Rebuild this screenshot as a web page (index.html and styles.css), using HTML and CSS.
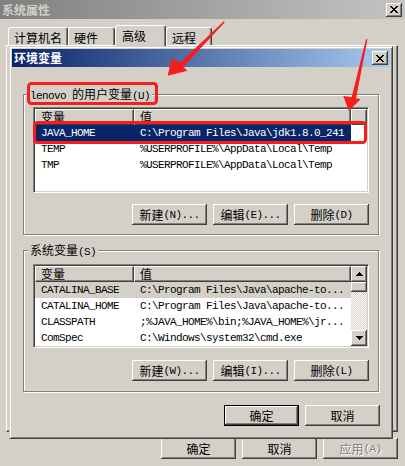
FILE: index.html
```html
<!DOCTYPE html>
<html lang="zh-CN">
<head>
<meta charset="utf-8">
<title>环境变量</title>
<link rel="stylesheet" href="styles.css">
</head>
<body>
<div class="outer">
  <div class="caption inactive">
    <span class="cap-title">系统属性</span>
    <span class="capbtn"><svg width="8" height="7" viewBox="0 0 8 7" shape-rendering="crispEdges"><path d="M0 0h2v1H0zM6 0h2v1H6zM1 1h2v1H1zM5 1h2v1H5zM2 2h4v1H2zM3 3h2v1H3zM2 4h4v1H2zM1 5h2v1H1zM5 5h2v1H5zM0 6h2v1H0zM6 6h2v1H6z" fill="#000"/></svg></span>
  </div>
  <div class="tabs">
    <div class="tab t1">计算机名</div>
    <div class="tab t2">硬件</div>
    <div class="tab t3 sel">高级</div>
    <div class="tab t4">远程</div>
  </div>
  <div class="tabpanel"></div>
  <div class="outer-btns">
    <div class="btn">确定</div>
    <div class="btn">取消</div>
    <div class="btn disabled">应用<span class="m">(A)</span></div>
  </div>
</div>

<div class="dialog">
  <div class="caption active">
    <span class="cap-title">环境变量</span>
    <span class="capbtn"><svg width="8" height="7" viewBox="0 0 8 7" shape-rendering="crispEdges"><path d="M0 0h2v1H0zM6 0h2v1H6zM1 1h2v1H1zM5 1h2v1H5zM2 2h4v1H2zM3 3h2v1H3zM2 4h4v1H2zM1 5h2v1H1zM5 5h2v1H5zM0 6h2v1H0zM6 6h2v1H6z" fill="#000"/></svg></span>
  </div>
  <div class="dbody">
    <div class="group g1">
      <div class="glabel"><span class="m">lenovo </span>的用户变量<span class="m">(U)</span></div>
      <div class="list l1">
        <div class="lmain">
          <div class="lhead"><div class="hc c1">变量</div><div class="hc c2">值</div><div class="hc c3"></div></div>
          <div class="row sel"><span class="c1 m">JAVA_HOME</span><span class="c2 m">C:\Program Files\Java\jdk1.8.0_241</span></div>
          <div class="row"><span class="c1 m">TEMP</span><span class="c2 m">%USERPROFILE%\AppData\Local\Temp</span></div>
          <div class="row"><span class="c1 m">TMP</span><span class="c2 m">%USERPROFILE%\AppData\Local\Temp</span></div>
        </div>
      </div>
      <div class="btnrow">
        <div class="btn">新建<span class="m">(N)...</span></div>
        <div class="btn">编辑<span class="m">(E)...</span></div>
        <div class="btn">删除<span class="m">(D)</span></div>
      </div>
    </div>

    <div class="group g2">
      <div class="glabel">系统变量<span class="m">(S)</span></div>
      <div class="list l2">
        <div class="lmain">
          <div class="lhead"><div class="hc c1">变量</div><div class="hc c2">值</div></div>
          <div class="row inact"><span class="c1 m">CATALINA_BASE</span><span class="c2 m">C:\Program Files\Java\apache-to...</span></div>
          <div class="row"><span class="c1 m">CATALINA_HOME</span><span class="c2 m">C:\Program Files\Java\apache-to...</span></div>
          <div class="row"><span class="c1 m">CLASSPATH</span><span class="c2 m">;%JAVA_HOME%\bin;%JAVA_HOME%\jr...</span></div>
          <div class="row"><span class="c1 m">ComSpec</span><span class="c2 m">C:\Windows\system32\cmd.exe</span></div>
        </div>
        <div class="vscroll">
          <div class="sbtn"><svg width="7" height="4" viewBox="0 0 7 4" shape-rendering="crispEdges"><path d="M3 0h1v1H3zM2 1h3v1H2zM1 2h5v1H1zM0 3h7v1H0z" fill="#000"/></svg></div>
          <div class="thumb"></div>
          <div class="track"></div>
          <div class="sbtn"><svg width="7" height="4" viewBox="0 0 7 4" shape-rendering="crispEdges"><path d="M0 0h7v1H0zM1 1h5v1H1zM2 2h3v1H2zM3 3h1v1H3z" fill="#000"/></svg></div>
        </div>
      </div>
      <div class="btnrow">
        <div class="btn">新建<span class="m">(W)...</span></div>
        <div class="btn">编辑<span class="m">(I)...</span></div>
        <div class="btn">删除<span class="m">(L)</span></div>
      </div>
    </div>

    <div class="dlg-btns">
      <div class="btn default">确定</div>
      <div class="btn">取消</div>
    </div>
  </div>
</div>

<svg class="annot" width="405" height="466" viewBox="0 0 405 466">
  <rect x="28.5" y="83.5" width="128" height="20" rx="3" fill="none" stroke="#f71d1d" stroke-width="3"/>
  <rect x="34.5" y="122.5" width="331" height="20" rx="3" fill="none" stroke="#f71d1d" stroke-width="3"/>
  <polygon points="224.8,22.3 183.3,66.7 187.3,70.7 167.7,75.7 171.7,58.3 180,62.7 223.8,21.3" fill="#f71d1d"/>
  <polygon points="367.4,39.5 356,98.3 360.7,99.3 348.7,110.7 343.3,96 351.7,97.3 366,39.1" fill="#f71d1d"/>
</svg>
</body>
</html>
```
FILE: styles.css
```css
* { box-sizing: border-box; }
html, body { margin: 0; padding: 0; }
body {
  position: relative;
  width: 405px;
  height: 466px;
  overflow: hidden;
  background: #d4d0c8;
  color: #000;
  font-family: "Noto Sans CJK SC", "Liberation Sans", sans-serif;
  font-size: 12px;
  line-height: 16px;
}
.m {
  font-family: "Liberation Mono", "Noto Sans CJK SC", monospace;
  font-size: 11px;
  letter-spacing: -0.6px;
}

/* caption bars */
.caption {
  display: flex;
  align-items: center;
  justify-content: space-between;
  font-weight: bold;
  white-space: nowrap;
}
.caption.inactive {
  height: 19px;
  padding: 0 3px 0 2px;
  background: linear-gradient(to right, #808080, #c4c4c4);
  color: #d4d0c8;
}
.caption.active {
  height: 18px;
  padding: 0 2px 0 2px;
  background: linear-gradient(to right, #0a246a, #a6caf0);
  color: #fff;
}
.capbtn {
  width: 16px;
  height: 14px;
  display: flex;
  align-items: center;
  justify-content: center;
  padding-right: 1px;
  background: #d4d0c8;
  box-shadow: inset -1px -1px #404040, inset 1px 1px #fff, inset -2px -2px #808080;
}

/* tabs */
.tabs {
  display: flex;
  align-items: flex-end;
  height: 20px;
  margin-top: 6px;
  padding-left: 8px;
}
.tab {
  height: 18px;
  padding: 2px 0 0 5px;
  border: 1px solid #fff;
  border-bottom: none;
  border-right-color: #404040;
  border-radius: 3px 3px 0 0;
  box-shadow: inset -1px 0 #808080;
  white-space: nowrap;
}
.t1 { width: 60px; }
.t2 { width: 47px; }
.t3 { width: 51px; }
.t4 { width: 46px; }
.tab.sel {
  position: relative;
  z-index: 1;
  height: 21px;
  margin-bottom: -1px;
  padding: 2px 0 0 6px;
  background: #d4d0c8;
}
.tabpanel {
  width: 392px;
  height: 387px;
  margin-left: 6px;
  border: 1px solid;
  border-color: #fff #404040 #404040 #fff;
  box-shadow: inset -1px -1px #808080;
}
.outer-btns {
  display: flex;
  justify-content: flex-end;
  gap: 6px;
  margin-top: 6px;
  padding-right: 7px;
}

/* buttons */
.btn {
  width: 75px;
  height: 21px;
  display: flex;
  align-items: center;
  justify-content: center;
  white-space: nowrap;
  background: #d4d0c8;
  box-shadow: inset -1px -1px #404040, inset 1px 1px #fff, inset -2px -2px #808080;
}
.btn.default {
  border: 1px solid #000;
}
.btn.disabled {
  color: #808080;
  text-shadow: 1px 1px #fff;
}

/* dialog window */
.dialog {
  position: absolute;
  left: 9px;
  top: 46px;
  width: 384px;
  height: 393px;
  padding: 2px;
  display: flex;
  flex-direction: column;
  background: #d4d0c8;
  border: 1px solid;
  border-color: #d4d0c8 #404040 #404040 #d4d0c8;
  box-shadow: inset 1px 1px #fff, inset -1px -1px #808080;
}
.dbody {
  display: flex;
  flex-direction: column;
  padding: 27px 11px 0 11px;
}
.group {
  position: relative;
  border: 1px solid #808080;
  box-shadow: inset 1px 1px #fff, 1px 1px #fff;
  padding: 12px 9px 9px 9px;
}
.g2 {
  margin-top: 15px;
  padding: 13px 9px 10px 9px;
}
.glabel {
  position: absolute;
  top: -9px;
  left: 4px;
  padding: 0 2px;
  line-height: 15px;
  background: #d4d0c8;
  white-space: nowrap;
}
.list {
  display: flex;
  padding: 1px;
  background: #fff;
  border: 1px solid;
  border-color: #808080 #fff #fff #808080;
  box-shadow: inset 1px 1px #404040, inset -1px -1px #d4d0c8;
  overflow: hidden;
}
.l1 { height: 86px; }
.l2 { height: 84px; }
.lmain {
  flex: 1;
  min-width: 0;
}
.lhead {
  display: flex;
  height: 16px;
}
.hc {
  height: 16px;
  padding-left: 5px;
  line-height: 14px;
  background: #d4d0c8;
  border: 1px solid;
  border-color: #fff #404040 #404040 #fff;
  box-shadow: inset -1px -1px #808080;
}
.hc.c1 { width: 99px; }
.hc.c2 { width: 217px; }
.hc.c3 { flex: 1; }
.row {
  display: flex;
  align-items: center;
  width: 316px;
  height: 16px;
  white-space: nowrap;
}
.row .c1 { width: 99px; padding-left: 6px; overflow: hidden; }
.row .c2 { width: 217px; padding-left: 6px; overflow: hidden; }
.row.sel { background: #0a246a; color: #fff; }
.row.inact { background: #d4d0c8; }

.vscroll {
  display: flex;
  flex-direction: column;
  width: 16px;
}
.sbtn, .thumb {
  display: flex;
  align-items: center;
  justify-content: center;
  background: #d4d0c8;
  box-shadow: inset -1px -1px #404040, inset 1px 1px #fff, inset -2px -2px #808080;
}
.sbtn { height: 16px; }
.thumb { height: 10px; }
.track {
  flex: 1;
  background-image: repeating-conic-gradient(#fff 0 25%, #d4d0c8 0 50%);
  background-size: 2px 2px;
}
.btnrow {
  display: flex;
  justify-content: flex-end;
  gap: 6px;
  margin-top: 11px;
}
.g2 .btnrow { margin-top: 12px; }
.dlg-btns {
  display: flex;
  justify-content: flex-end;
  gap: 6px;
  margin-top: 13px;
  margin-right: -1px;
}

/* annotations */
.annot {
  position: absolute;
  left: 0;
  top: 0;
  z-index: 10;
  pointer-events: none;
}
```
